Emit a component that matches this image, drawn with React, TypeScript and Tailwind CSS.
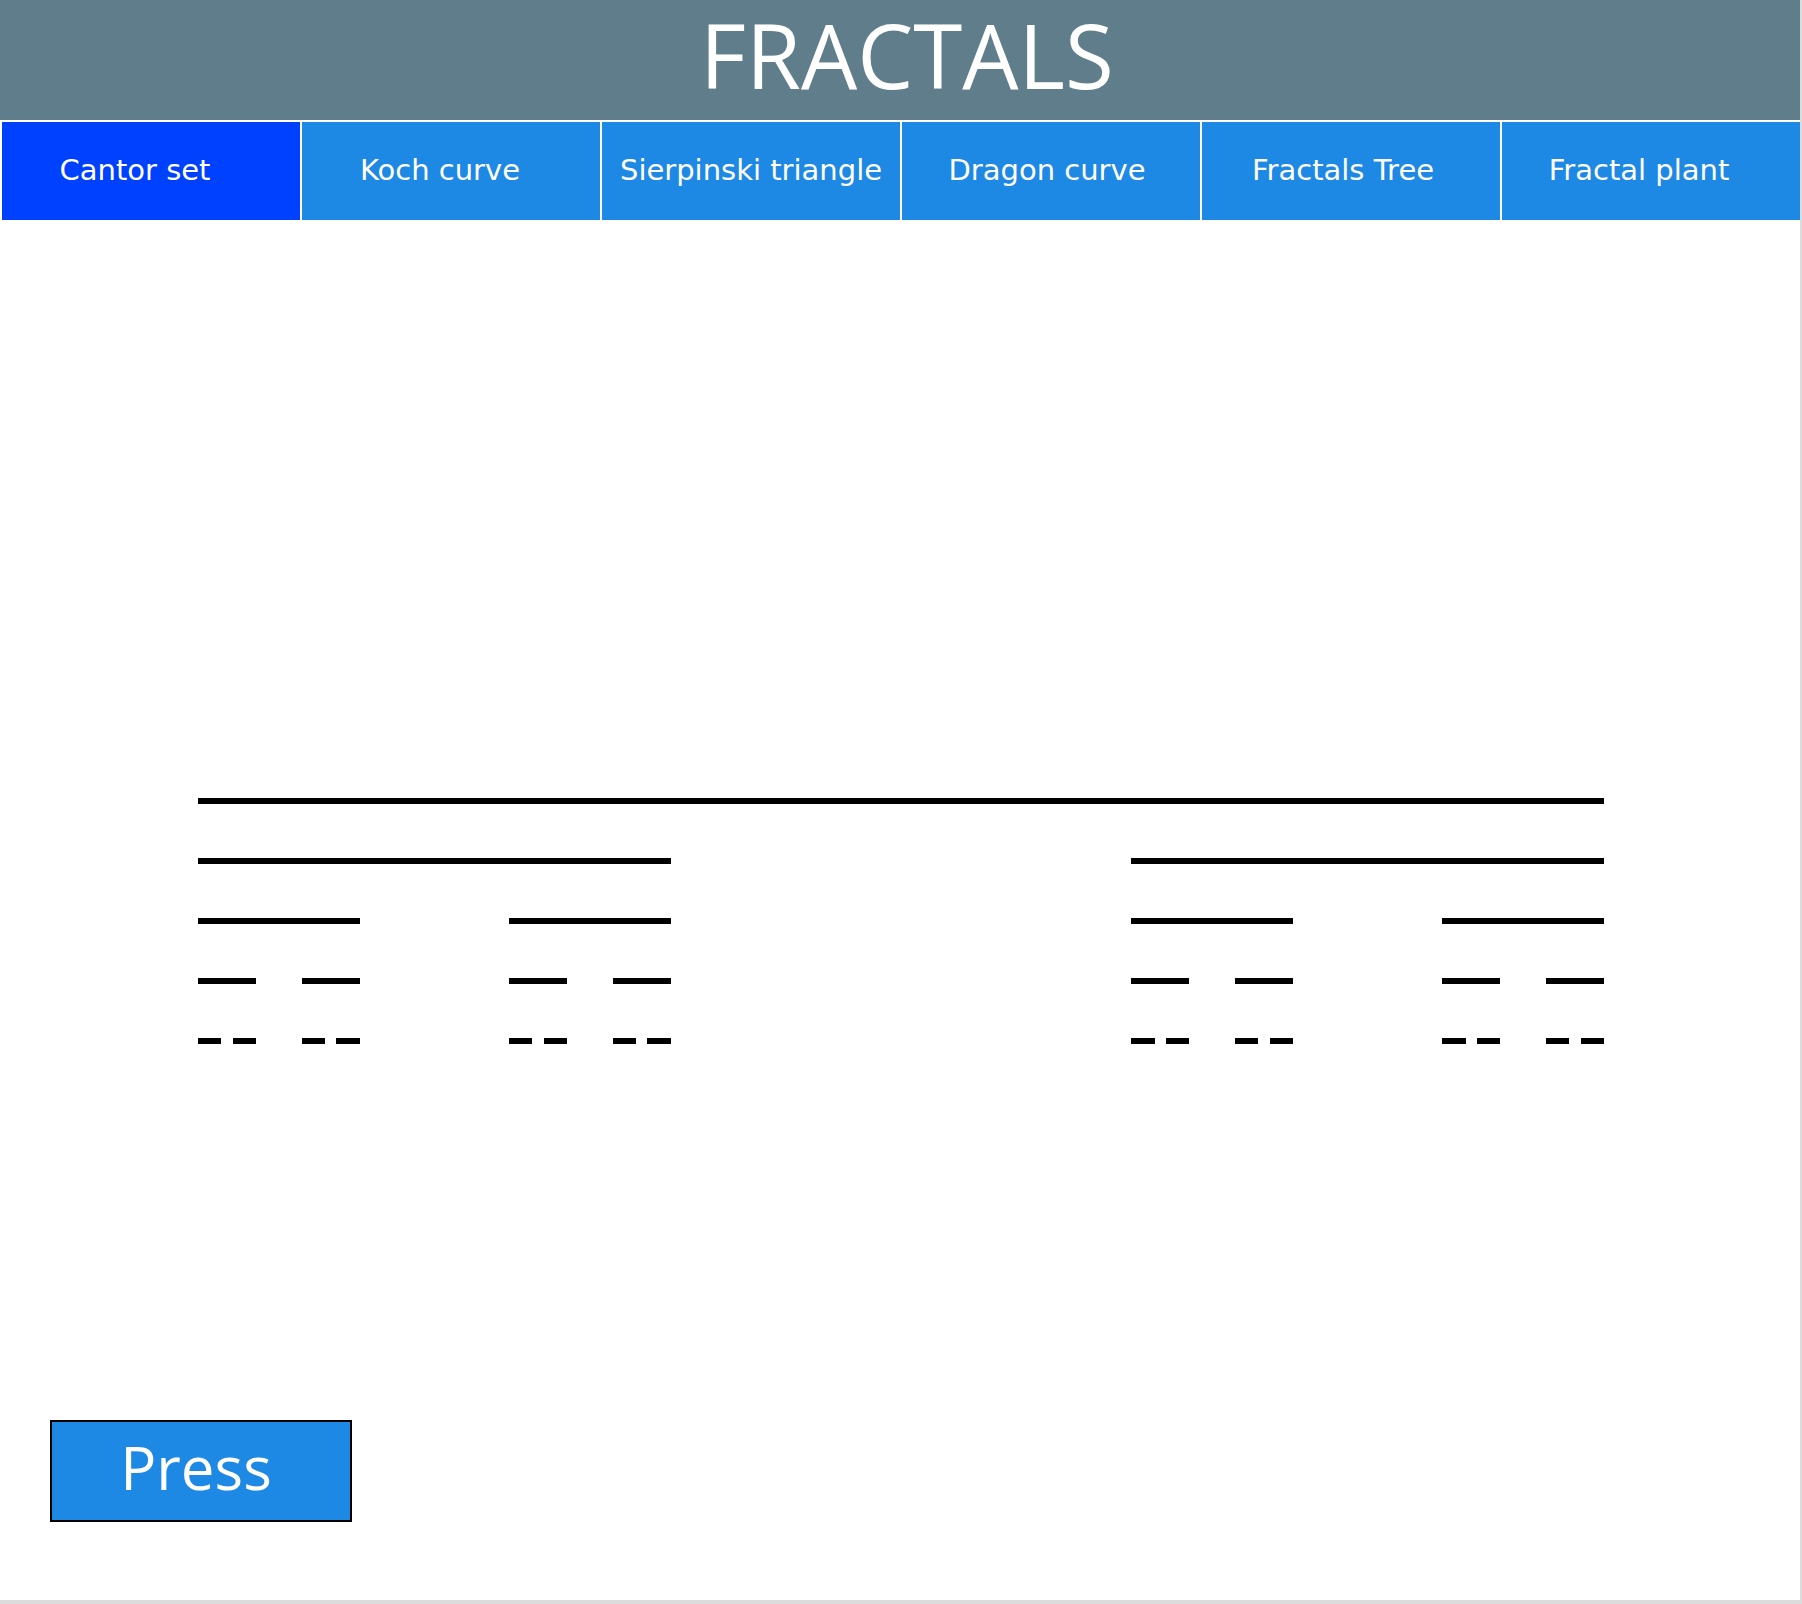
const tabs = [
  { label: "Cantor set", pad: "pr-[32px]" },
  { label: "Koch curve", pad: "pr-[22px]" },
  { label: "Sierpinski triangle", pad: "" },
  { label: "Dragon curve", pad: "pr-[8px]" },
  { label: "Fractals Tree", pad: "pr-[16px]" },
  { label: "Fractal plant", pad: "pr-[24px]" },
];

type Seg = { x1: number; x2: number; y: number };

// classic cantor: split in thirds, drop the middle
function cantor(x: number, y: number, len: number, depth: number, out: Seg[]) {
  if (depth === 0) return;
  out.push({ x1: x, x2: x + len, y });
  cantor(x, y + 60, len / 3, depth - 1, out);
  cantor(x + (len * 2) / 3, y + 60, len / 3, depth - 1, out);
}

function CantorSet() {
  const segs: Seg[] = [];
  cantor(201, 1, 1400, 5, segs);
  return (
    <svg width="1800" height="250" viewBox="0 0 1800 250" className="block" shapeRendering="crispEdges">
      {segs.map((s, i) => {
        const x = Math.round(s.x1 - 3);
        const w = Math.round(s.x2 + 3) - x;
        return <rect key={i} x={x} y={s.y} width={w} height={6} fill="#000" />;
      })}
    </svg>
  );
}

export default function App() {
  return (
    <div
      className="w-[1802px] h-[1604px] bg-[#dcdcdc]"
      style={{ fontFamily: '"DejaVu Sans", Verdana, sans-serif' }}
    >
      <div className="w-[1800px] h-[1600px] bg-white flex flex-col">
        {/* Header */}
        <header className="h-[120px] bg-[#607d8b] flex items-center justify-center pl-[14px] pb-[9px]">
          <h1 className="text-white text-[89px] leading-[1.2] font-['Open_Sans',sans-serif]">
            FRACTALS
          </h1>
        </header>

        {/* Tabs */}
        <nav className="mt-[2px] h-[98px] flex">
          {tabs.map((t, i) => (
            <button
              key={t.label}
              className={
                "w-[300px] h-full border-l-2 border-white flex items-center justify-center text-white text-[29px] " +
                t.pad +
                " " +
                (i === 0 ? "bg-[#0040ff]" : "bg-[#1e88e5]")
              }
            >
              {t.label}
            </button>
          ))}
        </nav>

        {/* Canvas */}
        <div className="pt-[577px]">
          <CantorSet />
        </div>

        <button className="mt-[373px] ml-[50px] w-[302px] h-[102px] border-2 border-black bg-[#1e88e5] flex items-center justify-center pr-[10px] pb-[8px] text-white text-[60px] font-['Open_Sans',sans-serif]">
          Press
        </button>
      </div>
    </div>
  );
}
